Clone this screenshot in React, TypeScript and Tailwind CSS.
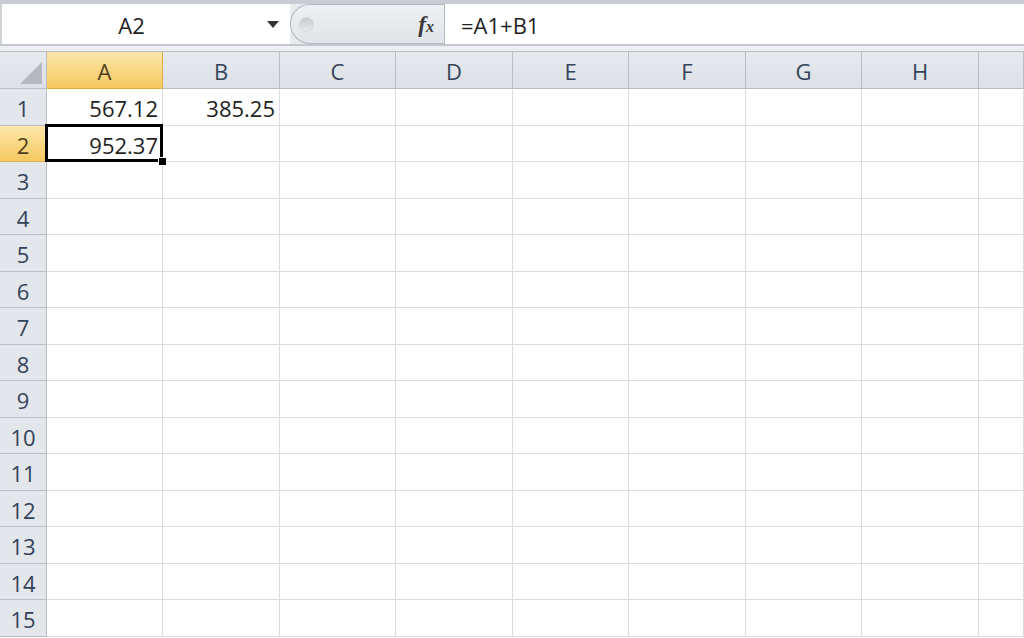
const cols = ["A", "B", "C", "D", "E", "F", "G", "H", ""];
const colW = ["w-[116px]", "w-[117px]", "w-[116px]", "w-[117px]", "w-[116px]", "w-[117px]", "w-[116px]", "w-[117px]", "flex-1"];
const rowH = ["h-[36px]", "h-[37px]"];

const data: Record<string, string> = {
  "1-0": "567.12",
  "1-1": "385.25",
  "2-0": "952.37",
};

function ColHeader({ label, i }: { label: string; i: number }) {
  const active = i === 0;
  return (
    <div
      className={`${colW[i]} h-full shrink-0 flex items-center justify-center pt-[3px] border-r border-b ${
        active
          ? "bg-gradient-to-b from-[#fbe7a8] to-[#f6c95e] border-[#e2a94a] text-[#4f3f1c]"
          : "bg-gradient-to-b from-[#e6e9ed] to-[#dde1e6] border-[#b9bec5] text-[#34425a]"
      }`}
    >
      {label}
    </div>
  );
}

function Row({ r }: { r: number }) {
  const active = r === 2;
  return (
    <div className={`flex ${rowH[r % 2]} shrink-0`}>
      <div
        className={`w-[47px] shrink-0 flex items-center justify-center pt-[3px] border-r border-b ${
          active
            ? "bg-gradient-to-b from-[#fbe7a8] to-[#f6c95e] border-[#e2a94a] text-[#4f3f1c]"
            : "bg-[#e3e6eb] border-[#b9bec5] text-[#34425a]"
        }`}
      >
        {r}
      </div>
      {cols.map((_, c) => (
        <div
          key={c}
          className={`${colW[c]} shrink-0 relative flex items-center justify-end pr-[4px] pt-[3px] border-r border-b border-[#dadcdf] text-[#1f1f1f]`}
        >
          {data[`${r}-${c}`]}
          {r === 2 && c === 0 && (
            <>
              <div className="absolute z-10 -left-[2px] -top-[2px] -right-px -bottom-px border-[3px] border-black pointer-events-none" />
              <div className="absolute z-20 -right-[5px] -bottom-[5px] w-[9px] h-[9px] bg-black border border-white" />
            </>
          )}
        </div>
      ))}
    </div>
  );
}

export default function App() {
  const rows = Array.from({ length: 15 }, (_, i) => i + 1);
  return (
    <div className="w-[1024px] h-[638px] overflow-hidden bg-white font-['Open_Sans',sans-serif] text-[22px] flex flex-col">
      {/* formula bar */}
      <div className="h-[4px] bg-[#c9cdd3] shrink-0" />
      <div className="flex h-[40px] shrink-0 bg-[#e9ecef]">
        <div className="w-[290px] shrink-0 bg-white flex items-center border-l-2 border-[#d0d4d9]">
          <div className="flex-1 text-center text-[#222] pl-[2px] pt-[2px] pr-[8px]">A2</div>
          <svg width="12" height="7" viewBox="0 0 12 7" className="mr-[11px]">
            <path d="M0 0h12L6 7z" fill="#333" />
          </svg>
        </div>
        <div className="w-[154px] shrink-0 flex items-center rounded-l-[20px] border border-r-0 border-[#b4b9c0] bg-gradient-to-b from-[#eef0f3] to-[#e1e4e8]">
          <div className="ml-[8px] w-[15px] h-[15px] rounded-full bg-gradient-to-b from-[#c6c9cd] to-[#e8eaed] border border-[#d6d9dd]" />
          <div className="flex-1" />
          <span className="mr-[10px] font-['Liberation_Serif',serif] italic font-bold text-[23px] text-[#3a3a3a] leading-none">
            f<span className="text-[16px]">x</span>
          </span>
        </div>
        <div className="flex-1 bg-white flex items-center pl-[16px] pt-[2px] border-l border-[#b4b9c0] text-[#1f1f1f]">
          =A1+B1
        </div>
      </div>
      <div className="h-[8px] shrink-0 bg-[#eceef1] border-t-2 border-[#c4c8ce] border-b border-b-[#b8bdc4]" />

      {/* sheet */}
      <div className="flex h-[37px] shrink-0">
        <div className="w-[47px] shrink-0 h-full bg-gradient-to-b from-[#e6e9ed] to-[#dde1e6] border-r border-b border-[#b9bec5] flex items-end justify-end p-[4px]">
          <svg width="22" height="22" viewBox="0 0 22 22">
            <path d="M22 0V22H0z" fill="#b5b9bf" />
          </svg>
        </div>
        {cols.map((c, i) => (
          <ColHeader key={i} label={c} i={i} />
        ))}
      </div>
      {rows.map((r) => (
        <Row key={r} r={r} />
      ))}
    </div>
  );
}
